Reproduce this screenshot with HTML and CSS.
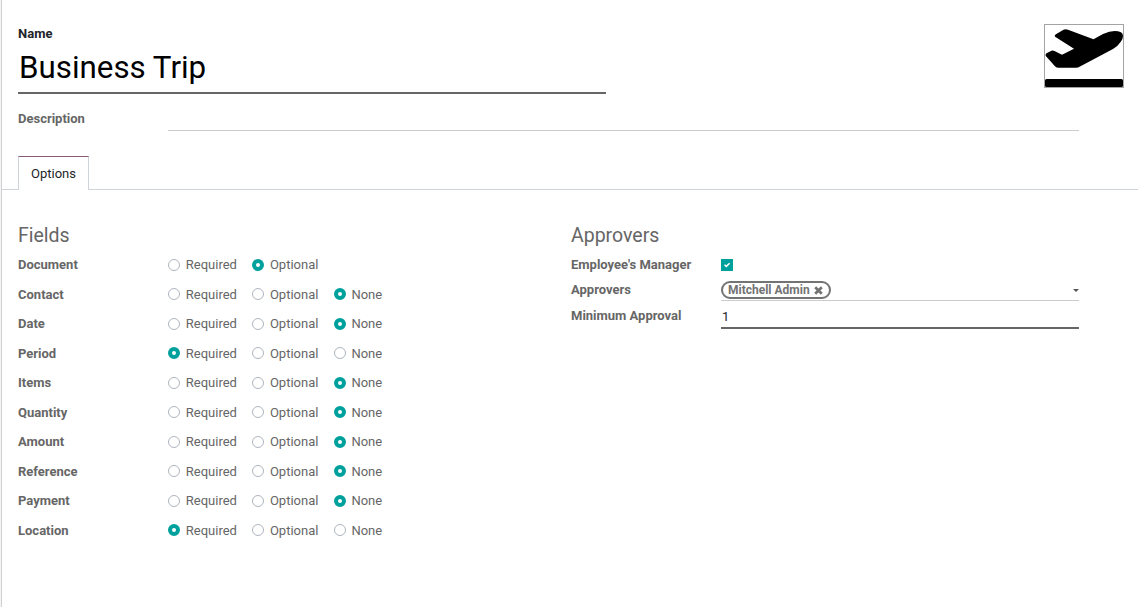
FILE: index.html
```html
<!DOCTYPE html>
<html lang="en">
<head>
<meta charset="utf-8">
<title>Business Trip</title>
<link rel="stylesheet" href="styles.css">
</head>
<body>
<main class="sheet">
  <header class="header">
    <div class="title">
      <div class="title-label">Name</div>
      <h1 class="title-value">Business Trip</h1>
    </div>
    <div class="picture">
      <svg viewBox="0 0 78 62" width="78" height="62"><path d="M10.500 9.500L18.500 4.800Q20.500 3.800 23 4.800L48.500 14.200L58 9Q69 4 76 7.300Q80 10 76 16.500Q73 21 68 24L35 41.500Q33 42.700 31 42.700L13 42.700Q11 42.700 9.500 40.800L0.800 31Q0 29 2 28L6.500 25.800Q8 25 9.500 26L17 29.800L29 23.700L10.500 12Q9 11 10.500 9.500Z"/><rect x="0" y="54" width="78" height="8" rx="1.500"/></svg>
    </div>
  </header>

  <div class="description">
    <span class="label">Description</span>
    <span class="description-input"></span>
  </div>

  <nav class="tabs"><span class="tab">Options</span></nav>

  <div class="columns">
    <section class="group">
      <h2 class="group-title">Fields</h2>
      <div class="row"><span class="label">Document</span><span class="radio"></span><span class="choice">Required</span><span class="radio on"></span><span class="choice">Optional</span></div>
      <div class="row"><span class="label">Contact</span><span class="radio"></span><span class="choice">Required</span><span class="radio"></span><span class="choice">Optional</span><span class="radio on"></span><span class="choice">None</span></div>
      <div class="row"><span class="label">Date</span><span class="radio"></span><span class="choice">Required</span><span class="radio"></span><span class="choice">Optional</span><span class="radio on"></span><span class="choice">None</span></div>
      <div class="row"><span class="label">Period</span><span class="radio on"></span><span class="choice">Required</span><span class="radio"></span><span class="choice">Optional</span><span class="radio"></span><span class="choice">None</span></div>
      <div class="row"><span class="label">Items</span><span class="radio"></span><span class="choice">Required</span><span class="radio"></span><span class="choice">Optional</span><span class="radio on"></span><span class="choice">None</span></div>
      <div class="row"><span class="label">Quantity</span><span class="radio"></span><span class="choice">Required</span><span class="radio"></span><span class="choice">Optional</span><span class="radio on"></span><span class="choice">None</span></div>
      <div class="row"><span class="label">Amount</span><span class="radio"></span><span class="choice">Required</span><span class="radio"></span><span class="choice">Optional</span><span class="radio on"></span><span class="choice">None</span></div>
      <div class="row"><span class="label">Reference</span><span class="radio"></span><span class="choice">Required</span><span class="radio"></span><span class="choice">Optional</span><span class="radio on"></span><span class="choice">None</span></div>
      <div class="row"><span class="label">Payment</span><span class="radio"></span><span class="choice">Required</span><span class="radio"></span><span class="choice">Optional</span><span class="radio on"></span><span class="choice">None</span></div>
      <div class="row"><span class="label">Location</span><span class="radio on"></span><span class="choice">Required</span><span class="radio"></span><span class="choice">Optional</span><span class="radio"></span><span class="choice">None</span></div>
    </section>

    <section class="group approvers">
      <h2 class="group-title">Approvers</h2>
      <div class="field manager">
        <span class="label">Employee's Manager</span>
        <span class="checkbox"><svg viewBox="0 0 12 12" width="12" height="12"><path d="M3.500 5.700L5.300 7.400L8.600 4.200" fill="none" stroke="#fff" stroke-width="1.500"/></svg></span>
      </div>
      <div class="field people">
        <span class="label">Approvers</span>
        <div class="tag-input">
          <span class="tag">Mitchell Admin<svg class="remove" viewBox="0 0 9 9" width="9" height="9"><path d="M1.200 1.200L7.800 7.800M7.800 1.200L1.200 7.800" stroke="#737373" stroke-width="2.700"/></svg></span>
          <span class="caret"></span>
        </div>
      </div>
      <div class="field minimum">
        <span class="label">Minimum Approval</span>
        <div class="number-input">1</div>
      </div>
    </section>
  </div>
</main>
</body>
</html>
```
FILE: styles.css
```css
* { box-sizing: border-box; }
body {
  margin: 0;
  background: #f4f4f4;
  color: #666;
  font: 13px/19.5px Roboto, "Liberation Sans", sans-serif;
}
.sheet {
  height: 607px;
  margin-left: 1px;
  border-left: 1px solid #d0d0d3;
  background: #fff;
  overflow: hidden;
}
.header {
  display: flex;
  justify-content: space-between;
  height: 94px;
  padding: 24px 14px 0 16px;
}
.title { width: 588px; }
.title-label { color: #212529; font-weight: 700; }
.title-value {
  height: 50.5px;
  margin: 0;
  padding: 0 1px;
  border-bottom: 2px solid #666;
  color: #000;
  font-size: 31.3px;
  font-weight: 400;
  line-height: 47px;
}
.picture {
  width: 80px;
  height: 64px;
  border: 1px solid #a3a3a3;
}
.picture svg, .checkbox svg { display: block; }
.label { flex: none; width: 150px; font-weight: 700; }
.description {
  display: flex;
  height: 37px;
  padding: 15px 59px 0 16px;
}
.description-input { flex: 1; border-bottom: 1px solid #ccc; }
.tabs {
  display: flex;
  height: 59px;
  padding: 25px 0 0 16px;
  border-bottom: 1px solid #ced4da;
}
.tab {
  width: 71px;
  height: 34px;
  margin-bottom: -1px;
  border: 1px solid #ced4da;
  border-top-color: #875a7b;
  border-bottom: 0;
  background: #fff;
  color: #212529;
  line-height: 33px;
  text-align: center;
}
.columns { display: flex; padding: 34px 59px 0 16px; }
.group { width: 553px; }
.approvers { width: 508px; }
.group-title {
  height: 31px;
  margin: 0;
  font-size: 19.5px;
  font-weight: 400;
  line-height: 24px;
}
.row { display: flex; align-items: center; height: 19.5px; margin-bottom: 10px; }
.radio {
  flex: none;
  width: 12px;
  height: 12px;
  margin-right: 5.8px;
  border: 1px solid #adb5bd;
  border-radius: 50%;
}
.radio.on { border: 4px solid #00a09d; background: #fff; }
.choice { margin-right: 15.2px; }
.field { display: flex; }
.manager { height: 25px; }
.checkbox { width: 12px; height: 12px; margin-top: 4px; background: #00a09d; }
.people { height: 26px; }
.tag-input {
  display: flex;
  justify-content: space-between;
  flex: 1;
  height: 21px;
  padding-top: 1px;
  border-bottom: 1px solid #ccc;
}
.tag {
  display: flex;
  align-items: center;
  width: 110px;
  height: 18px;
  padding-left: 5px;
  border: 2px solid #737373;
  border-radius: 9px;
  color: #737373;
  font-size: 12px;
  font-weight: 700;
  line-height: 14px;
}
.remove { margin-left: 4px; }
.caret {
  height: 3px;
  margin-top: 8px;
  border: 3px solid transparent;
  border-top-color: #555;
  border-bottom: 0;
}
.number-input {
  flex: 1;
  height: 23px;
  padding-left: 1px;
  border-bottom: 2px solid #666;
  color: #212529;
  line-height: 21px;
}
```
